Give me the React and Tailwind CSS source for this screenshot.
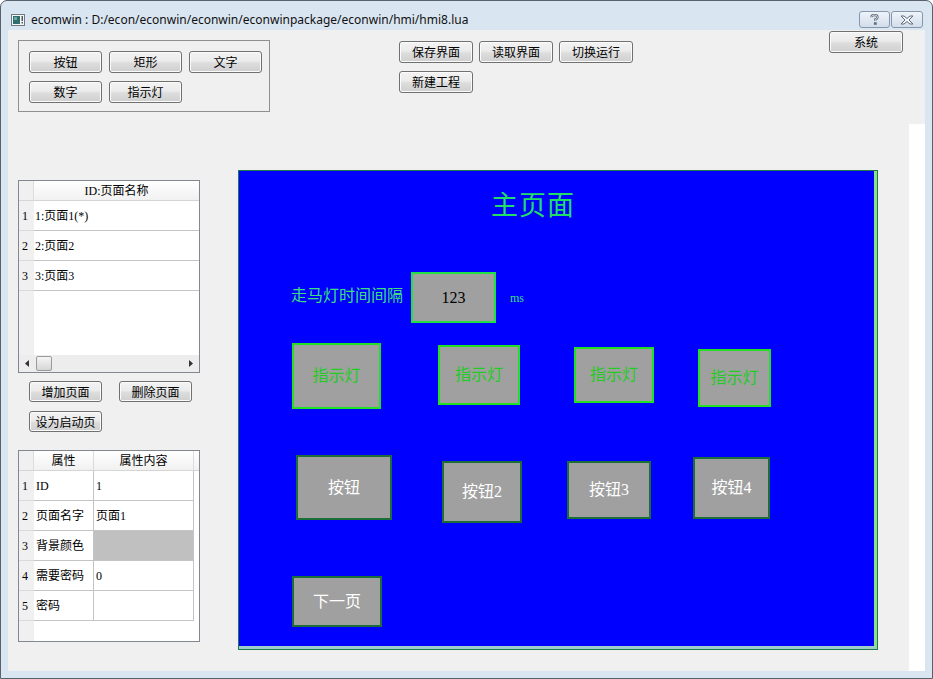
import React from 'react';

const serif = "font-['Liberation_Serif','Noto_Sans_CJK_SC',serif]";

// Win7 style push button
const Btn = ({ children, className = '' }) => (
  <div
    className={`flex items-center justify-center border border-[#707070] rounded-[3px] bg-[linear-gradient(#f3f3f3,#ebebeb_45%,#dddddd_55%,#cfcfcf)] text-[12px] leading-none text-black shadow-[inset_0_0_0_1px_#fbfbfb] ${className}`}
  >
    {children}
  </div>
);

const Lamp = ({ className }) => (
  <div
    className={`absolute flex items-center justify-center bg-[#a0a0a0] border-2 border-[#22e022] text-[16px] leading-none text-[#22cc22] ${className}`}
  >
    指示灯
  </div>
);

const HmiButton = ({ label, className }) => (
  <div
    className={`absolute flex items-center justify-center bg-[#a0a0a0] border-2 border-[#1c6e38] text-[16px] leading-none text-white ${className}`}
  >
    {label}
  </div>
);

const TitleBar = () => (
  <div className="h-[29px] flex items-center pt-[8px] pl-[10px] pr-[9px]">
    <svg width="14" height="12" viewBox="0 0 14 12" className="shrink-0">
      <rect x="0.5" y="0.5" width="13" height="11" fill="#f4f6f8" stroke="#6f7780" />
      <rect x="2" y="2" width="7" height="8" fill="#2f6e6a" />
      <rect x="3" y="3" width="3" height="3" fill="#6fa7a2" />
      <rect x="10.5" y="2" width="1.5" height="5" fill="#555" />
      <rect x="10.5" y="8" width="1.5" height="1.5" fill="#555" />
    </svg>
    <span className="ml-[6px] text-[12px] leading-none text-[#111] font-['Noto_Sans',sans-serif]">
      ecomwin : D:/econ/econwin/econwin/econwinpackage/econwin/hmi/hmi8.lua
    </span>
    <div className="ml-auto flex gap-[1px]">
      <div className="w-[31px] h-[17px] rounded-[3px] border border-[#8797ab] bg-linear-to-b from-[#eef3f9] to-[#d3deeb] flex items-center justify-center">
        <svg width="9" height="11" viewBox="0 0 9 11">
          <path d="M1.5 3.2 Q1.5 1 4.5 1 Q7.5 1 7.5 3.2 Q7.5 4.6 5.3 5.4 L5.3 7" fill="none" stroke="#5f6d7e" strokeWidth="2.4" />
          <path d="M1.5 3.2 Q1.5 1 4.5 1 Q7.5 1 7.5 3.2 Q7.5 4.6 5.3 5.4 L5.3 7" fill="none" stroke="#f4f6f9" strokeWidth="0.8" />
          <rect x="3.9" y="8.2" width="2.8" height="2.6" fill="#5f6d7e" />
        </svg>
      </div>
      <div className="w-[32px] h-[17px] rounded-[3px] border border-[#8797ab] bg-linear-to-b from-[#eef3f9] to-[#d3deeb] flex items-center justify-center">
        <svg width="14" height="10" viewBox="-1 -1 14 10">
          <path
            d="M0 0 H3 L6 2.5 L9 0 H12 L8 4 L12 8 H9 L6 5.5 L3 8 H0 L4 4 Z"
            fill="#f5f7fa"
            stroke="#5f6d7e"
            strokeWidth="1"
            strokeLinejoin="round"
          />
        </svg>
      </div>
    </div>
  </div>
);

const pages = ['1:页面1(*)', '2:页面2', '3:页面3'];

const PageTable = () => (
  <div className="w-[182px] h-[193px] border border-[#828790] bg-white flex flex-col">
    <div className="flex h-[20px] border-b border-[#d5d5d5]">
      <div className="w-[15px] bg-[#f0f0f0] border-r border-[#dcdcdc]" />
      <div className={`flex-1 flex items-center justify-center bg-linear-to-b from-white to-[#f1f1f1] text-[12px] leading-none ${serif}`}>
        ID:页面名称
      </div>
    </div>
    <div className="flex flex-1">
      <div className="w-[15px] bg-[#f0f0f0] flex flex-col">
        {pages.map((p, i) => (
          <div key={p} className={`h-[30px] border-b border-[#dadada] flex items-center pl-[3px] text-[12px] leading-none ${serif}`}>
            {i + 1}
          </div>
        ))}
      </div>
      <div className="flex-1 flex flex-col">
        {pages.map((p) => (
          <div key={p} className={`h-[30px] border-b border-[#c4c4c4] flex items-center pl-[1px] text-[12px] leading-none ${serif}`}>
            {p}
          </div>
        ))}
      </div>
    </div>
    {/* horizontal scrollbar */}
    <div className="h-[17px] bg-[#ededed] flex items-center px-[6px]">
      <svg width="4" height="7" viewBox="0 0 4 7"><path d="M4 0 L0 3.5 L4 7 Z" fill="#333" /></svg>
      <div className="ml-[7px] w-[16px] h-[15px] rounded-[2px] border border-[#9a9a9a] bg-linear-to-b from-[#f5f5f5] to-[#d6d6d6]" />
      <div className="flex-1" />
      <svg width="4" height="7" viewBox="0 0 4 7"><path d="M0 0 L4 3.5 L0 7 Z" fill="#333" /></svg>
    </div>
  </div>
);

const props = [
  ['ID', '1'],
  ['页面名字', '页面1'],
  ['背景颜色', null],
  ['需要密码', '0'],
  ['密码', ''],
];

const PropTable = () => (
  <div className={`w-[182px] h-[192px] border border-[#828790] bg-white flex flex-col text-[12px] leading-none ${serif}`}>
    <div className="flex h-[20px] border-b border-[#d5d5d5] bg-linear-to-b from-white to-[#f1f1f1]">
      <div className="w-[15px] bg-[#f0f0f0] border-r border-[#dcdcdc]" />
      <div className="w-[60px] border-r border-[#dcdcdc] flex items-center justify-center">属性</div>
      <div className="w-[100px] border-r border-[#dcdcdc] flex items-center justify-center">属性内容</div>
      <div className="flex-1" />
    </div>
    <div className="flex flex-1">
      <div className="w-[15px] bg-[#f0f0f0] flex flex-col">
        {props.map((r, i) => (
          <div key={r[0]} className="h-[30px] border-b border-[#dadada] flex items-center pl-[3px]">
            {i + 1}
          </div>
        ))}
      </div>
      <div className="flex flex-col">
        {props.map(([k, v]) => (
          <div key={k} className="flex h-[30px] border-b border-[#c4c4c4]">
            <div className="w-[60px] border-r border-[#c4c4c4] flex items-center pl-[2px]">{k}</div>
            <div className={`w-[100px] border-r border-[#c4c4c4] flex items-center pl-[2px] ${v === null ? 'bg-[#c0c0c0]' : ''}`}>
              {v}
            </div>
          </div>
        ))}
      </div>
    </div>
  </div>
);

const Canvas = () => (
  <div className="w-[640px] h-[480px] border border-[#1f7a4a]">
    <div className={`relative h-full bg-[#0000ff] border-r-[3px] border-b-[3px] border-r-[#8ce08c] border-b-[#9ccccc] ${serif}`}>
      <div className="absolute left-[252px] top-[19px] text-[27px] leading-none tracking-[1px] text-[#22dd66] font-['Noto_Sans_CJK_SC',sans-serif]">
        主页面
      </div>
      <div className="absolute left-[52px] top-[115px] text-[16px] leading-none text-[#3ddf7f] font-['Noto_Sans_CJK_SC',sans-serif]">
        走马灯时间间隔
      </div>
      <div className="absolute left-[172px] top-[101px] w-[85px] h-[51px] bg-[#a0a0a0] border-2 border-[#22e044] flex items-center justify-center text-[16px] leading-none text-black">
        123
      </div>
      <div className="absolute left-[271px] top-[121px] text-[12px] leading-none text-[#3ddf7f]">ms</div>

      <Lamp className="left-[53px] top-[172px] w-[89px] h-[66px]" />
      <Lamp className="left-[199px] top-[174px] w-[82px] h-[60px]" />
      <Lamp className="left-[335px] top-[176px] w-[80px] h-[56px]" />
      <Lamp className="left-[459px] top-[178px] w-[73px] h-[58px]" />

      <HmiButton label="按钮" className="left-[57px] top-[284px] w-[96px] h-[65px]" />
      <HmiButton label="按钮2" className="left-[203px] top-[290px] w-[80px] h-[62px]" />
      <HmiButton label="按钮3" className="left-[328px] top-[290px] w-[84px] h-[58px]" />
      <HmiButton label="按钮4" className="left-[454px] top-[286px] w-[77px] h-[62px]" />
      <HmiButton label="下一页" className="left-[53px] top-[405px] w-[90px] h-[51px]" />
    </div>
  </div>
);

export default function App() {
  return (
    <div className="w-[933px] h-[679px] bg-[#dae5f2] border border-[#58616c] rounded-t-[7px] flex flex-col overflow-hidden font-['Noto_Sans_CJK_SC',sans-serif]">
      <TitleBar />
      <div className="flex-1 mx-[7px] mb-[7px] bg-[#f0f0f0] flex">
        <div className="w-[901px] flex flex-col">
          {/* toolbar area */}
          <div className="h-[140px] flex items-start">
            <div className="ml-[10px] mt-[10px] w-[252px] h-[72px] border border-[#8f8f8f] pl-[10px] pt-[10px]">
              <div className="grid grid-cols-[73px_73px_73px] gap-x-[7px] gap-y-[8px]">
                <Btn className="h-[22px]">按钮</Btn>
                <Btn className="h-[22px]">矩形</Btn>
                <Btn className="h-[22px]">文字</Btn>
                <Btn className="h-[22px]">数字</Btn>
                <Btn className="h-[22px]">指示灯</Btn>
              </div>
            </div>
            <div className="ml-[129px] mt-[11px] grid grid-cols-[74px_74px_74px] gap-x-[6px] gap-y-[8px]">
              <Btn className="h-[22px]">保存界面</Btn>
              <Btn className="h-[22px]">读取界面</Btn>
              <Btn className="h-[22px]">切换运行</Btn>
              <Btn className="h-[22px]">新建工程</Btn>
            </div>
            <Btn className="ml-auto mr-[6px] mt-[1px] w-[74px] h-[22px]">系统</Btn>
          </div>

          {/* work area */}
          <div className="flex-1 flex">
            <div className="w-[230px] pl-[10px] pt-[10px] flex flex-col">
              <PageTable />
              <div className="flex gap-[17px] ml-[11px] mt-[8px]">
                <Btn className="w-[73px] h-[21px]">增加页面</Btn>
                <Btn className="w-[73px] h-[21px]">删除页面</Btn>
              </div>
              <Btn className="ml-[11px] mt-[9px] w-[73px] h-[21px]">设为启动页</Btn>
              <div className="mt-[18px]">
                <PropTable />
              </div>
            </div>
            <Canvas />
          </div>
        </div>
        <div className="flex-1 pt-[94px] flex flex-col">
          <div className="flex-1 bg-white" />
        </div>
      </div>
    </div>
  );
}
